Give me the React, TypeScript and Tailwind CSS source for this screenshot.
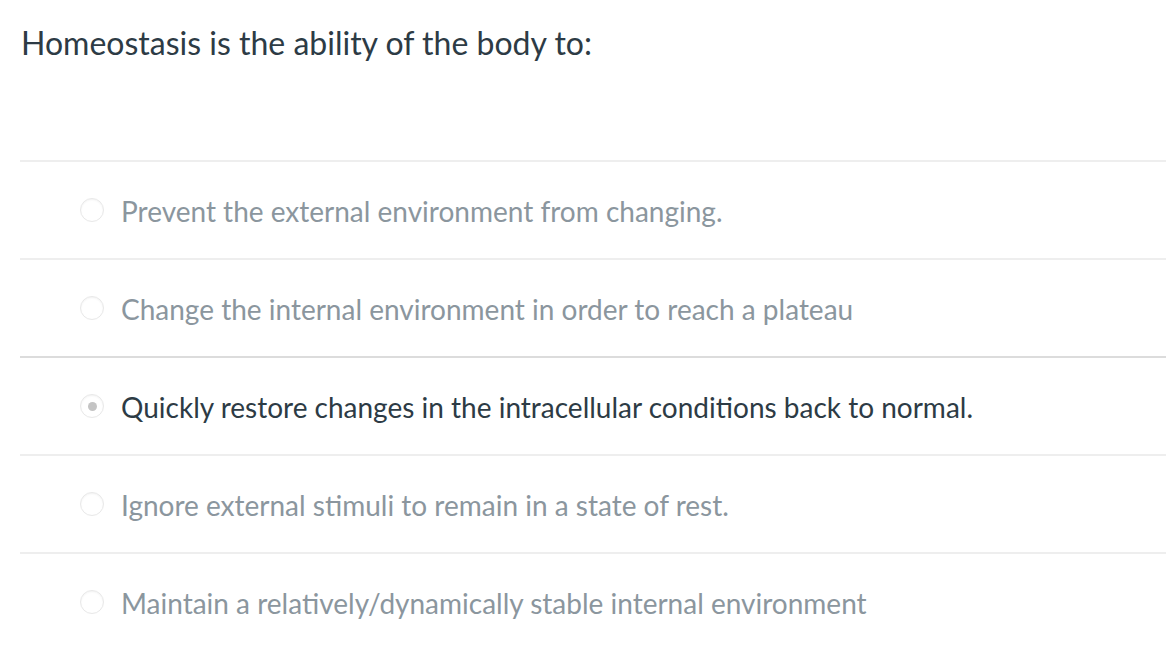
import React from "react";

const options = [
  "Prevent the external environment from changing.",
  "Change the internal environment in order to reach a plateau",
  "Quickly restore changes in the intracellular conditions back to normal.",
  "Ignore external stimuli to remain in a state of rest.",
  "Maintain a relatively/dynamically stable internal environment",
];

export default function App() {
  const selected = 2;
  return (
    <div
      className="w-[1166px] h-[670px] bg-white overflow-hidden pl-[20px]"
      style={{ fontFamily: "Lato, 'Noto Sans', sans-serif" }}
    >
      <div className="h-[160px] pt-[19px]">
        <h1 className="text-[32px] leading-[48px] text-[#2d3b45] pl-[1px]">
          Homeostasis is the ability of the body to:
        </h1>
      </div>
      {options.map((o, i) => (
        <div
          key={i}
          className={
            "h-[98px] border-t-2 flex items-center " +
            (i === selected ? "border-[#dcdcdc]" : "border-[#eeeeee]")
          }
        >
          <div className="ml-[60px] w-[24px] h-[24px] rounded-full border border-[#e8e8e8] shadow-[inset_0_1px_2px_rgba(0,0,0,0.05)] bg-white flex items-center justify-center">
            {i === selected && (
              <div className="w-[9px] h-[9px] rounded-full bg-[#c4c4c4]" />
            )}
          </div>
          <span
            className={
              "ml-[17px] text-[28px] leading-[40px] relative top-[1px] " +
              (i === selected ? "text-[#2d3b45]" : "text-[#8b969e]")
            }
          >
            {o}
          </span>
        </div>
      ))}
    </div>
  );
}
